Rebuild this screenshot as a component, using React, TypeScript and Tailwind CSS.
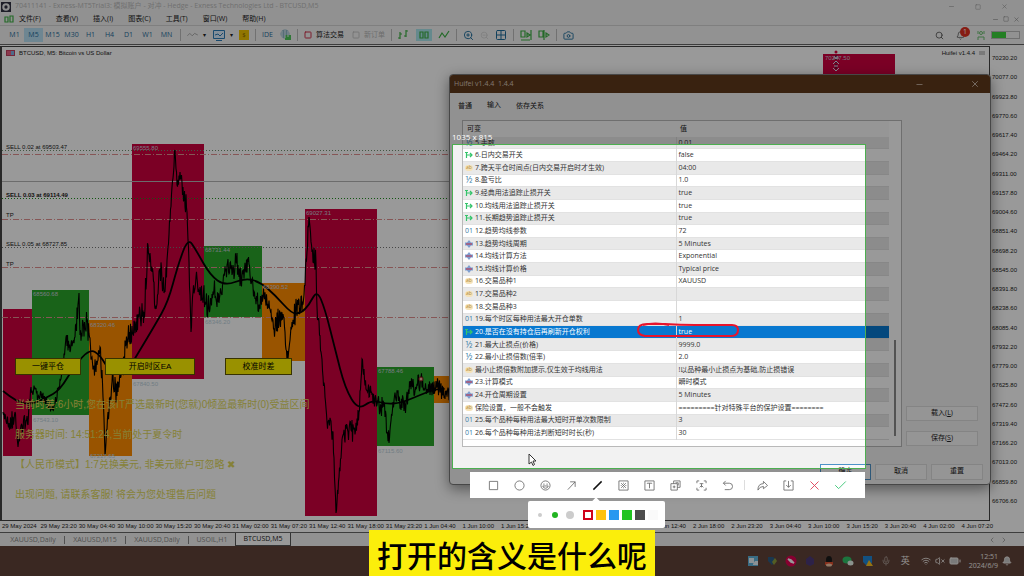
import React, { useState } from "react";
import {
  Battery, Bell, Camera, Check, ChevronLeft, ChevronRight, Grid2x2, Mic, Minus,
  Search, Square, VolumeX, Wifi, X, ZoomIn, ZoomOut,
} from "lucide-react";

const menus = ["文件(F)", "查看(V)", "插入(I)", "图表(C)", "工具(T)", "窗口(W)", "帮助(H)"];
const frames = ["M1", "M5", "M15", "M30", "H1", "H4", "D1", "W1", "MN"];

const times = [
  "29 May 2024", "29 May 23:20", "30 May 04:40", "30 May 10:00", "30 May 15:20", "30 May 20:40",
  "31 May 02:00", "31 May 07:20", "31 May 12:40", "31 May 18:00", "31 May 23:20", "1 Jun 04:40",
  "1 Jun 10:00", "1 Jun 15:20", "1 Jun 20:40", "2 Jun 02:00", "2 Jun 07:20", "2 Jun 12:40",
  "2 Jun 18:00", "2 Jun 23:20", "3 Jun 04:40", "3 Jun 10:00", "3 Jun 15:20", "3 Jun 20:40",
  "4 Jun 02:00", "4 Jun 07:20",
];

const prices = Array.from({ length: 24 }, (_, i) => (70230.2 - i * 153.2).toFixed(2));

// x, y, width, height, colour (plot coordinates)
const zones: [number, number, number, number, string][] = [
  [1, 262, 29, 147, "#cd003f"],
  [30, 243, 57, 125, "#2aa52a"],
  [87, 273, 43, 136, "#ff8c00"],
  [130, 97, 72, 235, "#cd003f"],
  [202, 199, 58, 71, "#2aa52a"],
  [260, 236, 43, 78, "#ff8c00"],
  [303, 162, 72, 307, "#cd003f"],
  [375, 320, 57, 79, "#2aa52a"],
  [432, 329, 60, 27, "#ff8c00"],
  [821, 7, 72, 40, "#cd003f"],
];

// x, y, spread of the candles around that point
const pricePoints: [number, number, number][] = [
  [1, 365, 6], [8, 380, 10], [13, 365, 10], [16, 400, 5], [20, 378, 10], [26, 378, 10], [29, 340, 6],
  [36, 350, 6], [44, 352, 6], [51, 362, 5], [57, 340, 6], [61, 322, 6], [64, 290, 8], [68, 305, 10],
  [73, 290, 12], [77, 246, 4], [78, 288, 12], [85, 275, 12], [90, 310, 12], [94, 325, 14], [98, 300, 12],
  [101, 350, 12], [103, 408, 4], [106, 365, 12], [110, 335, 14], [116, 345, 12], [122, 310, 12],
  [126, 290, 12], [131, 285, 10], [137, 270, 14], [142, 265, 14], [146, 198, 8], [150, 225, 10],
  [154, 262, 8], [158, 222, 12], [163, 245, 10], [166, 200, 6], [170, 140, 6], [173, 103, 5],
  [175, 138, 8], [178, 125, 12], [181, 140, 12], [185, 165, 6], [187, 215, 8], [189, 285, 6],
  [191, 245, 8], [194, 230, 10], [198, 240, 14], [203, 255, 14], [207, 262, 8], [212, 242, 12],
  [217, 256, 8], [224, 222, 12], [230, 228, 12], [234, 214, 14], [239, 235, 8], [246, 215, 8],
  [251, 240, 10], [257, 258, 10], [262, 248, 8], [268, 262, 10], [273, 282, 12], [278, 268, 12],
  [283, 285, 12], [286, 312, 6], [290, 275, 12], [296, 258, 12], [302, 248, 10], [305, 205, 10],
  [307, 170, 5], [310, 205, 12], [314, 215, 12], [315, 260, 8], [319, 305, 6], [323, 350, 6],
  [325, 375, 10], [331, 385, 12], [333, 440, 5], [334, 466, 4], [337, 430, 6], [341, 388, 10],
  [346, 385, 12], [352, 382, 12], [357, 365, 8], [360, 312, 8], [364, 342, 8], [370, 348, 10],
  [375, 358, 10], [382, 360, 10], [387, 396, 4], [391, 355, 10], [397, 350, 12], [402, 364, 8],
  [408, 340, 10], [414, 342, 10], [419, 332, 8], [425, 342, 8], [431, 342, 10], [437, 338, 10],
  [443, 352, 10], [449, 348, 10],
];

const buildPrice = () => {
  let seed = 11;
  const rnd = () => {
    seed = (seed * 1103515245 + 12345) % 2147483648;
    return seed / 2147483648 - 0.5;
  };
  const out: string[] = [];
  for (let i = 0; i < pricePoints.length - 1; i++) {
    const [x1, y1, s1] = pricePoints[i];
    const [x2, y2] = pricePoints[i + 1];
    const steps = Math.max(1, Math.round((x2 - x1) / 0.5));
    for (let k = 0; k < steps; k++) {
      const t = k / steps;
      const off = k === 0 ? 0 : rnd() * s1 * 2;
      out.push(`${(x1 + (x2 - x1) * t).toFixed(1)},${(y1 + (y2 - y1) * t + off).toFixed(1)}`);
    }
  }
  return out.join(" ");
};

const maPoints: [number, number][] = [
  [1, 344], [14, 354], [28, 358], [44, 351], [58, 343], [73, 318], [88, 302], [98, 308], [108, 325],
  [123, 328], [138, 303], [153, 278], [166, 255], [176, 218], [186, 191], [194, 203], [208, 228],
  [223, 239], [243, 231], [258, 235], [273, 248], [290, 267], [299, 266], [307, 258], [315, 243],
  [323, 262], [333, 302], [343, 341], [356, 363], [370, 353], [384, 357], [399, 356], [418, 348],
  [436, 341], [449, 343],
];

// smooth the average with midpoints
const maPath = maPoints.reduce((d, [x, y], i) => {
  if (i === 0) return `M${x} ${y}`;
  const [px, py] = maPoints[i - 1];
  return `${d} Q${px} ${py} ${(px + x) / 2} ${(py + y) / 2}`;
}, "");

const levels: [number, string, string][] = [
  [103, "#6f8f6f", "1 2"],
  [107, "#e09090", "6 2 1 2"],
  [151, "#1f8f1f", "1 2"],
  [172, "#e09090", "6 2 1 2"],
  [200, "#777777", "1 2"],
  [220, "#e09090", "6 2 1 2"],
  [270, "#e09090", "6 2 1 2"],
];

const notes = [
  "当前时差:6小时,您在该IT严选最新时(您就)0倾盈最新时(0)受益区间",
  "服务器时间: 14:51:24,当前处于夏令时",
  "【人民币模式】1:7兑换美元, 非美元账户可忽略 ✖",
  "出现问题, 请联系客服! 将会为您处理售后问题",
];

const Chart = () => (
  <div className="relative min-w-0 flex-1 overflow-hidden border-l-2 border-t border-r border-b border-[#444] bg-white font-['Liberation_Sans','Noto_Sans_CJK_SC',sans-serif] text-[6px] leading-2">
    <svg className="absolute inset-0 h-full w-full">
      {zones.map(([x, y, w, h, c]) => (
        <rect key={`${x}-${y}`} x={x} y={y} width={w} height={h} fill={c} />
      ))}
      {levels.map(([y, c, dash]) => (
        <line key={y} x1="0" x2="100%" y1={y + 0.5} y2={y + 0.5} stroke={c} strokeDasharray={dash} />
      ))}
      <line x1="0" x2="100%" y1="134.5" y2="134.5" stroke="#b4b4b4" />
      <polyline points={buildPrice()} fill="none" stroke="#000" strokeWidth="1.1" />
      <path d={maPath} fill="none" stroke="#000" strokeWidth="1.8" />
      <circle cx="419" cy="332" r="2" fill="#e8b0a0" stroke="#8b1a1a" />
      <circle cx="834" cy="5" r="1.5" fill="#e00040" />
      <path d="M834 8v14" stroke="#223" strokeDasharray="2 1" />
      <path d="M831 11h6M832 9l2 3 2-3M831 17l3-3 3 3M831 21l3 3 3-3M832 19h4" stroke="#dde" fill="none" />
    </svg>

    <div className="absolute left-1 top-0.5 flex items-center gap-1">
      <span className="flex h-[6px] w-[9px] border border-[#c04060] bg-[#7fb2e6]">
        <span className="h-full w-1 bg-[#e86080]" />
      </span>
      <span>BTCUSD, M5: Bitcoin vs US Dollar</span>
    </div>
    <span className="absolute right-1 top-0.5 flex items-center gap-1">
      Huifei v1.4.4 <span className="h-1 w-1.5 bg-[#ccc]" />
    </span>

    <span className="absolute left-1 top-24">SELL 0.02 at 69503.47</span>
    <span className="absolute left-1 top-[144px] font-bold">SELL 0.03 at 69114.49</span>
    <span className="absolute left-1 top-[164px]">TP</span>
    <span className="absolute left-1 top-[193px]">SELL 0.05 at 68727.85</span>
    <span className="absolute left-1 top-[213px]">TP</span>

    <div className="text-[#c8cdd8]">
      <span className="absolute left-[131px] top-[97px]">69555.80</span>
      <span className="absolute left-[31px] top-[243px]">68560.68</span>
      <span className="absolute left-[88px] top-[274px]">68320.46</span>
      <span className="absolute left-[203px] top-[199px]">68731.44</span>
      <span className="absolute left-[261px] top-[236px]">68390.52</span>
      <span className="absolute left-[304px] top-[162px]">69027.31</span>
      <span className="absolute left-[376px] top-[320px]">67788.46</span>
      <span className="absolute left-[823px] top-[7px]">70247.50</span>
    </div>
    <div className="text-[#bcd2dc]">
      <span className="absolute left-[31px] top-[369px]">67543.10</span>
      <span className="absolute left-[88px] top-[405px]">67217.65</span>
      <span className="absolute left-[131px] top-[333px]">67840.50</span>
      <span className="absolute left-[203px] top-[271px]">68346.20</span>
      <span className="absolute left-[376px] top-[400px]">67115.60</span>
    </div>

    <div className="absolute left-[13px] top-[311px] flex text-[8px] text-black">
      <button className="h-[17px] w-[66px] border border-[#5c5400] bg-[#fff200]">一键平仓</button>
      <button className="ml-6 h-[17px] w-[90px] border border-[#5c5400] bg-[#fff200]">开启时区EA</button>
      <button className="ml-[30px] h-[17px] w-[67px] border border-[#5c5400] bg-[#fff200]">校准时差</button>
    </div>

    <div className="absolute left-[13px] top-[343px] flex flex-col text-[10px] leading-[30px] text-[#e0d85c]">
      {notes.map((n) => (
        <p key={n} className="whitespace-nowrap">{n}</p>
      ))}
    </div>
  </div>
);

const Sep = () => <span className="h-3 w-px shrink-0 bg-[#bdbdbd]" />;

const Candles = ({ d }: { d: string }) => (
  <svg viewBox="0 0 12 12" className="h-3 w-3" fill="none" stroke="#3cb043" strokeWidth="1.2">
    <path d={d} />
  </svg>
);

const Toolbar = () => (
  <div className="flex h-[19px] items-center border-b border-[#666] bg-[#f4f4f4] pl-[5px] pr-1 text-[7px] text-[#1f6d9c]">
    {frames.map((f) => (
      <button key={f} className={`h-3.5 w-[19px] shrink-0 ${f === "M5" ? "bg-[#b8e0f4]" : ""}`}>{f}</button>
    ))}
    <div className="ml-1 flex flex-1 items-center gap-[6px]">
      <Sep />
      <button aria-label="Line studies" className="flex items-center gap-1">
        <svg viewBox="0 0 14 10" className="h-2 w-3" fill="none" stroke="#999"><path d="M0 6l3-3 3 3 3-3 4 2" /></svg>
        <span className="text-[6px] text-[#222]">▾</span>
      </button>
      <button aria-label="Templates" className="flex items-center gap-1">
        <svg viewBox="0 0 14 12" className="h-3 w-3.5" fill="#dcefff" stroke="#2b7cb8"><path d="M1.5 1.5h11v8h-11zM4 11.5h6M3 6l3-1 2 2 3-3" /></svg>
        <span className="text-[6px] text-[#222]">▾</span>
      </button>
      <button className="h-2.5 w-2.5 bg-[#f2c500] text-[6px] leading-2 text-[#8a6a00]">$</button>
      <Sep />
      <button>IDE</button>
      <svg viewBox="0 0 12 12" className="h-3 w-3" fill="#8fb6c9"><circle cx="6" cy="5" r="4.5" /><path d="M6 6h6v5H6z" fill="#4fc65a" /><path d="M3 2v7M6 1v8M9 2v6" stroke="#e8f4f8" /></svg>
      <Sep />
      <button className="flex items-center gap-1 text-[#222]"><Square size={8} color="#d0304a" strokeWidth={3} /> 算法交易</button>
      <button className="ml-0.5 flex items-center gap-1 text-[#b4b4b4]"><Square size={8} /> 新订单</button>
      <Sep />
      <Candles d="M2 3v7M0 9h2M2 5h2M8 1v7M8 2h2M6 7h2" />
      <span className="bg-[#a8e4ec] px-0.5"><Candles d="M2 3h3v6H2zM7 3h3v6H7z" /></span>
      <Candles d="M1 9l3-5 3 4 4-6" />
      <Sep />
      <ZoomIn size={11} />
      <ZoomOut size={9} color="#d0d0d0" />
      <Grid2x2 size={12} />
      <Sep />
      <Candles d="M1 2h4v6H1zM7 4l3 2-3 2zM11 1v10M1 11h9" />
      <Candles d="M1 2h4v6H1zM6 1v10M8 4l3 2-3 2z" />
      <Sep />
      <Camera size={11} />
    </div>
    <div className="flex items-center gap-3">
      <Search size={9} color="#444" />
      <span className="relative">
        <Bell size={9} color="#555" />
        <span className="absolute -top-1 left-1 h-2.5 w-2.5 rounded-full bg-[#e03020] text-center text-[7px] leading-[10px] text-white">1</span>
      </span>
      <svg viewBox="0 0 8 10" className="h-2.5 w-2" fill="none" stroke="#6cbf70"><circle cx="4" cy="3" r="1.5" /><path d="M1 10V7h6v3M1 1v3M7 1v3" /></svg>
      <span className="-ml-1.5 flex h-2 w-[29px] border border-[#bbb]"><span className="w-1/2 bg-[#3cd43c]" /></span>
    </div>
  </div>
);

type Kind = "bool" | "ab" | "half" | "int" | "enum";

const rows: [Kind, string, string][] = [
  ["half", "5.手数", "0.01"],
  ["bool", "6.日内交易开关", "false"],
  ["ab", "7.跨天平仓时间点(日内交易开启时才生效)", "04:00"],
  ["half", "8.盈亏比", "1.0"],
  ["bool", "9.经典用法追踪止损开关", "true"],
  ["bool", "10.均线用法追踪止损开关", "true"],
  ["bool", "11.长期趋势追踪止损开关", "true"],
  ["int", "12.趋势均线参数", "72"],
  ["enum", "13.趋势均线周期", "5 Minutes"],
  ["enum", "14.均线计算方法", "Exponential"],
  ["enum", "15.均线计算价格", "Typical price"],
  ["ab", "16.交易品种1", "XAUUSD"],
  ["ab", "17.交易品种2", ""],
  ["ab", "18.交易品种3", ""],
  ["int", "19.每个时区每种用法最大开仓单数", "1"],
  ["bool", "20.是否在没有持仓后再刷新开仓权利", "true"],
  ["half", "21.最大止损点(价格)", "9999.0"],
  ["half", "22.最小止损倍数(倍率)", "2.0"],
  ["ab", "最小止损倍数附加提示,仅生效于均线用法", "!以品种最小止损点为基础,防止损错误"],
  ["enum", "23.计算模式", "瞬时模式"],
  ["enum", "24.开仓周期设置", "5 Minutes"],
  ["ab", "保险设置，一般不会触发", "=========针对特殊平台的保护设置========"],
  ["int", "25.每个品种每种用法最大短时开单次数限制", "3"],
  ["int", "26.每个品种每种用法判断短时时长(秒)", "30"],
];

const KindIcon = ({ kind }: { kind: Kind }) => {
  if (kind === "int") return <span className="text-[7px] text-[#3a7ca5]">01</span>;
  if (kind === "half") return <span className="text-[9px] text-[#3a7ca5]">½</span>;
  if (kind === "ab") return <span className="h-1.5 rounded-sm bg-[#f6e3b8] px-px text-[5px] leading-[5px] text-[#b08a3c]">ab</span>;
  return (
    <svg viewBox="0 0 8 8" className="h-2 w-2" fill="none">
      {kind === "bool" ? (
        <path d="M1.500 2v5M1.500 4h5M5 2l2 2-2 2M0 1.500h3" stroke="#35c46a" strokeWidth="1.200" />
      ) : (
        <>
          <path d="M4 0l2 2.500h2v3H6L4 8 2 5.500H0v-3h2z" fill="#7f9fd0" />
          <path d="M1 4h6" stroke="#a85070" strokeWidth="1.400" />
        </>
      )}
    </svg>
  );
};

const InputsTable = () => {
  const [selected, setSelected] = useState(15);

  return (
    <div className="ml-3 flex h-[327px] w-[440px] border border-[#b9b9b9] bg-white">
      <table className="h-[319px] w-[426px] table-fixed border-collapse text-[7px] leading-2">
        <thead>
          <tr className="h-4 bg-[#fafafa] text-left text-[#222]">
            <th className="w-1/2 pl-1 font-normal">可变</th>
            <th className="w-1/2 pl-1 font-normal">值</th>
          </tr>
        </thead>
        <tbody>
          {rows.map(([kind, name, value], i) => (
            <tr
              key={name}
              onClick={() => setSelected(i)}
              className={`border-b border-[#e2e2e2] ${
                i === selected ? "bg-[#0878d0] text-white" : i % 2 ? "bg-white text-[#333]" : "bg-[#e9e9e9] text-[#333]"
              }`}
            >
              <td className="border-r border-[#d8d8d8] p-0">
                <div className="flex items-center whitespace-nowrap">
                  <span className="flex h-2 w-3 shrink-0 items-center justify-center"><KindIcon kind={kind} /></span>
                  {name}
                </div>
              </td>
              <td className="whitespace-nowrap p-0 pl-0.5">{value}</td>
            </tr>
          ))}
        </tbody>
      </table>
      <div className="flex flex-1 flex-col justify-end pb-2.5 pl-[5px]">
        <span className="h-24 w-0.5 bg-[#8a8a8a]" />
      </div>
    </div>
  );
};

const Dialog = () => (
  <div className="absolute left-[449px] top-[74px] flex h-[411px] w-[542px] flex-col overflow-hidden rounded-sm border border-[#777] bg-[#f2f2f2] text-[7px] text-[#222] shadow-[0_4px_14px_rgba(0,0,0,0.45)]">
    <div className="flex h-[18px] shrink-0 items-center bg-[#60391b] pl-1 pr-2.5 text-[#d8c8bc]">
      <span className="flex-1">Huifei v1.4.4&nbsp; 1.4.4</span>
      <button aria-label="Minimize" className="mr-[46px]"><Minus size={9} /></button>
      <button aria-label="Close"><X size={10} /></button>
    </div>
    <div className="flex h-[27px] shrink-0 items-center gap-[15px] pl-2">
      <button>普通</button>
      <button className="pb-0.5">输入</button>
      <button>依存关系</button>
    </div>
    <div className="flex">
      <InputsTable />
      <div className="flex flex-1 flex-col justify-end gap-2.5 pb-px pl-1 pr-3">
        <button className="h-[15px] border border-[#dcdcdc] bg-[#f8f8f8]">载入(<u>L</u>)</button>
        <button className="h-[15px] border border-[#dcdcdc] bg-[#f8f8f8]">保存(<u>S</u>)</button>
      </div>
    </div>
    <div className="flex flex-1 items-center justify-end gap-1 pt-3 pr-[7px]">
      <button className="h-4 w-[51px] border border-[#4d93c8] bg-[#fafafa]">确定</button>
      <button className="h-4 w-[52px] border border-[#dcdcdc] bg-[#f8f8f8]">取消</button>
      <button className="h-4 w-[52px] border border-[#dcdcdc] bg-[#f8f8f8]">重置</button>
    </div>
  </div>
);

// 12 x 12 outlines
const tools = [
  { label: "Rectangle", d: "M1.500 1.500h9v9h-9z" },
  { label: "Ellipse", d: "M6 1a5 5 0 1 1 0 10a5 5 0 1 1 0-10z" },
  { label: "Sticker", d: "M6 1a5 5 0 1 1 0 10a5 5 0 1 1 0-10zM3 6.500h6Q8.500 9 6 9T3 6.500M3.500 4.500h1.500M7 4.500h1.500" },
  { label: "Arrow", d: "M2 10.500L10 2M4.500 2H10v5.500" },
  { label: "Pen", d: "M1.500 10.500l9-9" },
  { label: "Mosaic", d: "M1 1h10v10H1zM3.500 3.500l5 5M8.500 3.500l-5 5M6 3v1M6 8v1M3 6h1M8 6h1" },
  { label: "Text", d: "M1 1h10v10H1zM3.500 4V3.500h5V4M6 3.500V9" },
  { label: "Pin", d: "M4 4V1h7v7H8M1 4h7v7H1zM4.500 6v3M3 7.500h3M6 3h3v3" },
  { label: "Scan", d: "M1 3.500V1h2.500M8.500 1H11v2.500M11 8.500V11H8.500M3.500 11H1V8.500M4 4h4M6 4v4M4 8l2-2 2 2" },
  { label: "Undo", d: "M4 1L1.500 3.500L4 6M1.500 3.500H8a3 3 0 0 1 0 7H3" },
];

const ToolButton = ({ label, d }: { label: string; d: string }) => (
  <button aria-label={label} className="flex w-[26px] shrink-0 justify-center">
    <svg viewBox="0 0 12 12" className="h-[11px] w-[11px]" fill="none" stroke={label === "Pen" ? "#111" : "#666"} strokeWidth={label === "Pen" ? 1.6 : 0.9}>
      <path d={d} />
    </svg>
  </button>
);

const penColors = ["bg-[#ffc20e]", "bg-[#2898f0]", "bg-[#22c322]", "bg-[#4d4d4d]", "bg-[#fafafa]"];

const SnipTools = () => (
  <>
    <div className="absolute left-[470px] top-[472px] flex h-[26px] w-[395px] items-center bg-white pl-2.5">
      {tools.map((t) => (
        <ToolButton key={t.label} label={t.label} d={t.d} />
      ))}
      <span className="mx-1 h-2.5 w-px bg-[#ddd]" />
      <ToolButton label="Share" d="M1 11Q1 4 7 4V1.500L11.500 6L7 9.500V7Q3 7 1 11z" />
      <ToolButton label="Save" d="M3.500 1H1v10h10V1H8.500M6 1v7M3.500 5.500L6 8l2.500-2.500" />
      <button aria-label="Cancel" className="flex w-[26px] justify-center"><X size={15} strokeWidth={1.5} color="#e0455c" /></button>
      <button aria-label="Done" className="flex w-[26px] justify-center"><Check size={15} strokeWidth={1.5} color="#3ec878" /></button>
    </div>
    <div className="absolute left-[592px] top-[499px] h-2 w-2 rotate-45 bg-white" />
    <div className="absolute left-[528px] top-[501px] flex h-[27px] w-[137px] items-center rounded-xs bg-white pl-2.5">
      <button aria-label="Thin" className="h-1 w-1 rounded-full bg-[#ccc]" />
      <button aria-label="Medium" className="ml-2.5 h-1.5 w-1.5 rounded-full bg-[#22b422]" />
      <button aria-label="Thick" className="ml-2 h-2 w-2 rounded-full bg-[#ccc]" />
      <button aria-label="Red" className="ml-[9px] h-2.5 w-2.5 border-2 border-[#d0021b] bg-white" />
      {penColors.map((c) => (
        <button key={c} aria-label={c} className={`ml-[3px] h-2.5 w-2.5 ${c}`} />
      ))}
    </div>
  </>
);

const Taskbar = () => (
  <div className="flex h-[30px] shrink-0 items-center justify-end bg-[#62443a] pr-3 text-[#f4f0ee]">
    <div className="flex items-center">
      <span className="flex w-[19px] justify-center"><svg viewBox="0 0 12 12" className="h-3 w-3"><path d="M1 1h10v10H1z" fill="#5fb4dc" /><path d="M2 3h5v5H2zM8 6h3v4H6V9z" fill="#e8f4fa" /></svg></span>
      <span className="flex w-[19px] justify-center"><svg viewBox="0 0 12 12" className="h-3 w-3"><path d="M2 2h5l3 3-4 5-4-4z" fill="#2c5c84" /><path d="M6 7l3-4 2 3-3 4z" fill="#8c9c3c" /></svg></span>
      <span className="flex w-[19px] justify-center"><svg viewBox="0 0 12 12" className="h-3 w-3"><circle cx="6" cy="6" r="5.5" fill="#e00050" /><path d="M3 4l3 1 3 3-3-1z" stroke="#fff" strokeWidth="1.5" /></svg></span>
      <span className="flex w-[19px] justify-center"><svg viewBox="0 0 12 12" className="h-3 w-3"><path d="M6 1l4 3v5l-4 2-4-2V4z" fill="#4c3a78" /></svg></span>
      <span className="flex w-[19px] justify-center"><svg viewBox="0 0 12 12" className="h-3 w-3"><ellipse cx="6" cy="5" rx="3" ry="4" fill="#1a1a1a" /><path d="M2 7h8v3H2z" fill="#e05030" /><ellipse cx="6" cy="10" rx="3" ry="1.5" fill="#f4c8a8" /></svg></span>
      <span className="flex w-[19px] justify-center"><svg viewBox="0 0 12 12" className="h-3 w-3"><ellipse cx="5" cy="5" rx="4.5" ry="3.5" fill="#30c468" /><ellipse cx="8.5" cy="8" rx="3" ry="2.5" fill="#e8f4ec" /></svg></span>
      <span className="flex w-[19px] justify-center"><svg viewBox="0 0 12 12" className="h-3 w-3"><path d="M2 1h9v7l-5 3-4-4z" fill="#2088d8" /><path d="M8 5l4 6H5z" fill="#f8c020" /></svg></span>
      <span className="flex w-[19px] justify-center"><Mic size={10} color="#a89a94" /></span>
      <span className="w-[19px] text-center text-[9px]">英</span>
    </div>
    <Wifi size={10} className="ml-1.5" />
    <VolumeX size={10} className="ml-1" />
    <Battery size={12} className="ml-1" fill="#ccc" />
    <div className="ml-2 text-right text-[7px] leading-[9px]">
      <p>12:51</p>
      <p>2024/6/9</p>
    </div>
    <Bell size={10} className="ml-1" fill="#ccc" />
  </div>
);

const App = () => (
  <div className="relative flex h-screen flex-col overflow-hidden bg-[#f2f2f2] font-['Open_Sans','Noto_Sans_CJK_SC',sans-serif]">
    {/* Title bar */}
    <div className="flex h-[13px] shrink-0 items-center gap-1 bg-[#f2f2f2] pl-px pr-4 text-[7px] text-[#bbb]">
      <svg viewBox="0 0 12 12" className="h-2.5 w-2.5"><path d="M0 0h12v12H0z" fill="#334" /><circle cx="6" cy="6" r="4.5" fill="#eee" /><circle cx="6" cy="6" r="2" fill="#334" /></svg>
      <span className="flex-1">70411141 - Exness-MT5Trial3: 模拟账户 - 对冲 - Hedge - Exness Technologies Ltd - BTCUSD,M5</span>
      <div className="flex items-center gap-5 text-[#999]">
        <Minus size={7} />
        <Square size={6} />
        <X size={7} />
      </div>
    </div>

    {/* Menu */}
    <div className="flex h-[13px] shrink-0 items-center border-b border-[#d4d4d4] pl-1 pr-1 text-[7px] text-[#222]">
      <Candles d="M1 4h3v5H1zM6 3h3v6H6z" />
      <div className="ml-[3px] flex flex-1 gap-[15px]">
        {menus.map((m) => (
          <button key={m} className="whitespace-nowrap">{m}</button>
        ))}
      </div>
      <div className="flex items-center gap-1 text-[#888]">
        <Minus size={7} />
        <Square size={6} />
        <X size={7} />
      </div>
    </div>

    <Toolbar />

    {/* Chart window */}
    <div className="flex min-h-0 flex-1 flex-col bg-white pt-px font-['Liberation_Sans',sans-serif] text-[6px] text-[#222]">
      <div className="flex min-h-0 flex-1">
        <Chart />
        <div className="flex w-[34px] flex-col justify-between pb-4 pl-0.5 pt-2 leading-2">
          {prices.map((p) => (
            <span key={p}>{p}</span>
          ))}
        </div>
      </div>
      <div className="mr-6 grid h-[11px] shrink-0 grid-cols-[repeat(26,minmax(0,1fr))] pl-0.5 leading-[10px]">
        {times.map((t) => (
          <span key={t} className="whitespace-nowrap">{t}</span>
        ))}
      </div>
    </div>

    {/* Chart tabs */}
    <div className="flex h-3.5 shrink-0 items-center border-t border-[#666] pl-0.5 pr-4 text-[7px] text-[#888]">
      <button className="w-[63px] border-r border-[#888] leading-2">XAUUSD,Daily</button>
      <button className="w-[61px] border-r border-[#888] leading-2">XAUUSD,M15</button>
      <button className="w-[63px] border-r border-[#888] leading-2">XAUUSD,Daily</button>
      <button className="w-[46px] leading-2">USOIL,H1</button>
      <button className="h-full w-[56px] border-x border-b border-[#555] bg-white text-[#222]">BTCUSD,M5</button>
      <div className="flex flex-1 justify-end gap-1">
        <ChevronLeft size={8} />
        <ChevronRight size={8} />
      </div>
    </div>

    <Taskbar />

    <Dialog />

    {/* Capture region, everything around it is dimmed */}
    <div className="absolute left-[452px] top-[144px] h-[325px] w-[414px] border border-[#4caf50] shadow-[0_0_0_4000px_rgba(0,0,0,0.4)]" />
    <span className="absolute left-[452px] top-[132px] text-[8px] leading-[10px] text-white">1035 x 815</span>
    <svg className="absolute left-[635px] top-[321px] h-5 w-[108px]" fill="none" stroke="#e8142c" strokeWidth="2">
      <path d="M60 4H97Q103 4 103 9Q103 15 96 15H10Q3 14 3 9Q3 3 12 3H30Q45 4 60 4M8 4Q20 1 34 4" />
    </svg>
    <svg viewBox="0 0 10 14" className="absolute left-[528px] top-[453px] h-3.5 w-2.5">
      <path d="M1 1v10l2.5-2 1.5 3.5 1.5-1L5 8h3z" fill="#fff" stroke="#333" />
    </svg>

    <SnipTools />

    {/* Subtitle */}
    <p className="absolute bottom-0 left-[369px] h-[46px] w-[286px] bg-[#fbee0b] text-center font-['Noto_Sans_CJK_SC',sans-serif] text-[30px] font-medium leading-[48px] text-black">
      打开的含义是什么呢
    </p>
  </div>
);

export default App;
